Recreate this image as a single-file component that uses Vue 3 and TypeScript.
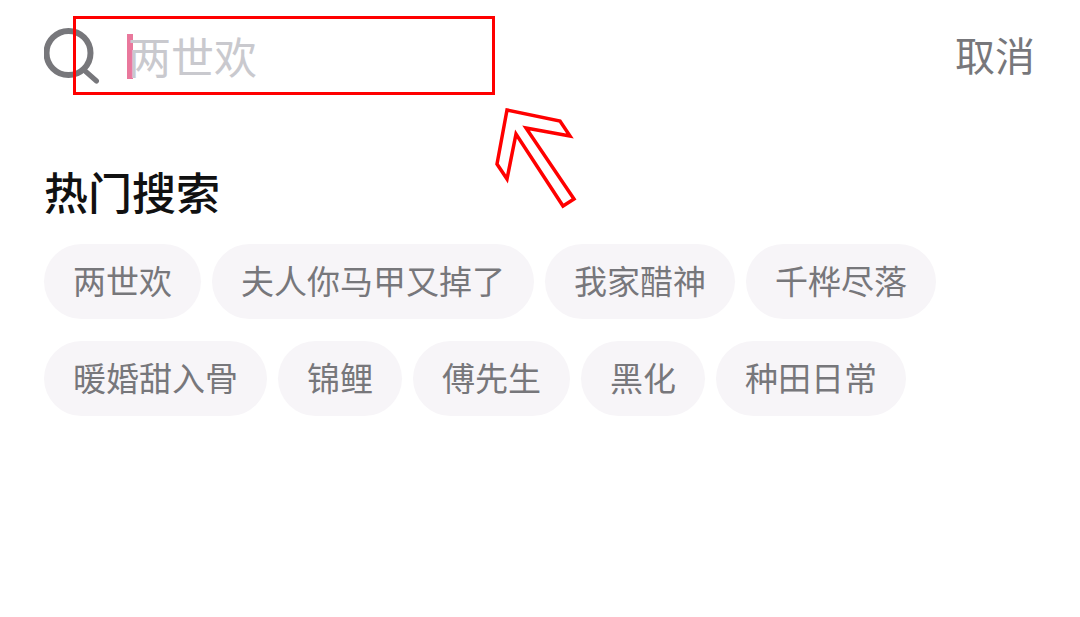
<script setup lang="ts">
const rows: string[] = ['两世欢','夫人你马甲又掉了','我家醋神','千桦尽落','暖婚甜入骨','锦鲤','傅先生','黑化','种田日常']
</script>

<template>
  <div class="page">
    <header class="search">
      <svg class="icon" width="56" height="56" viewBox="0 0 56 56" fill="none" stroke="#77777b" stroke-linecap="round">
        <circle cx="24.500" cy="25" r="22" stroke-width="6" />
        <path d="M40 42 L52.500 53" stroke-width="5" />
      </svg>
      <div class="field">
        <span class="caret"></span>
        <span class="placeholder">两世欢</span>
      </div>
      <span class="cancel">取消</span>
    </header>
    <h2 class="title">热门搜索</h2>
    <div class="chips">
      <span v-for="c in rows" :key="c" class="chip">{{ c }}</span>
    </div>
    <div class="mark-box"></div>
    <svg class="mark-arrow" width="90" height="110" viewBox="0 0 90 110" fill="none" stroke="#ff0000" stroke-width="3.500">
      <path d="M17 10 L70 21 L80 36 L36 28 L84 99 L73 106 L26 34 L17 79 L7 64 Z" />
    </svg>
  </div>
</template>

<style>
html, body { margin: 0; background: #fff; }
</style>

<style scoped>
.page {
  position: relative;
  width: 1080px;
  height: 617px;
  overflow: hidden;
  background: #fff;
  font-family: "Noto Sans CJK SC", "Noto Sans", sans-serif;
}
.search {
  display: flex;
  align-items: center;
  height: 56px;
  padding: 28px 45px 0 44px;
}
.icon { flex: none; }
.field {
  flex: 1;
  display: flex;
  align-items: center;
  margin-left: 27px;
  margin-top: -2px;
}
.caret {
  width: 6px;
  height: 45px;
  margin-top: 2px;
  background: #e9789c;
  flex: none;
}
.placeholder {
  margin-left: -5px;
  font-size: 43px;
  line-height: 56px;
  color: #c9c9ce;
}
.cancel {
  margin-top: -5px;
  font-size: 40px;
  line-height: 56px;
  color: #77777b;
}
.title {
  margin: 76px 0 0 44px;
  font-size: 44px;
  line-height: 62px;
  font-weight: 500;
  color: #111;
}
.chips {
  display: flex;
  flex-wrap: wrap;
  gap: 22px 11px;
  margin: 22px 130px 0 44px;
}
.chip {
  height: 75px;
  line-height: 73px;
  padding: 0 29px;
  border-radius: 38px;
  background: #f7f5f8;
  color: #77777b;
  font-size: 33px;
  font-weight: 400;
}
.mark-box {
  position: absolute;
  left: 73px;
  top: 16px;
  width: 416px;
  height: 73px;
  border: 3px solid #ff0000;
}
.mark-arrow {
  position: absolute;
  left: 490px;
  top: 100px;
}
</style>
